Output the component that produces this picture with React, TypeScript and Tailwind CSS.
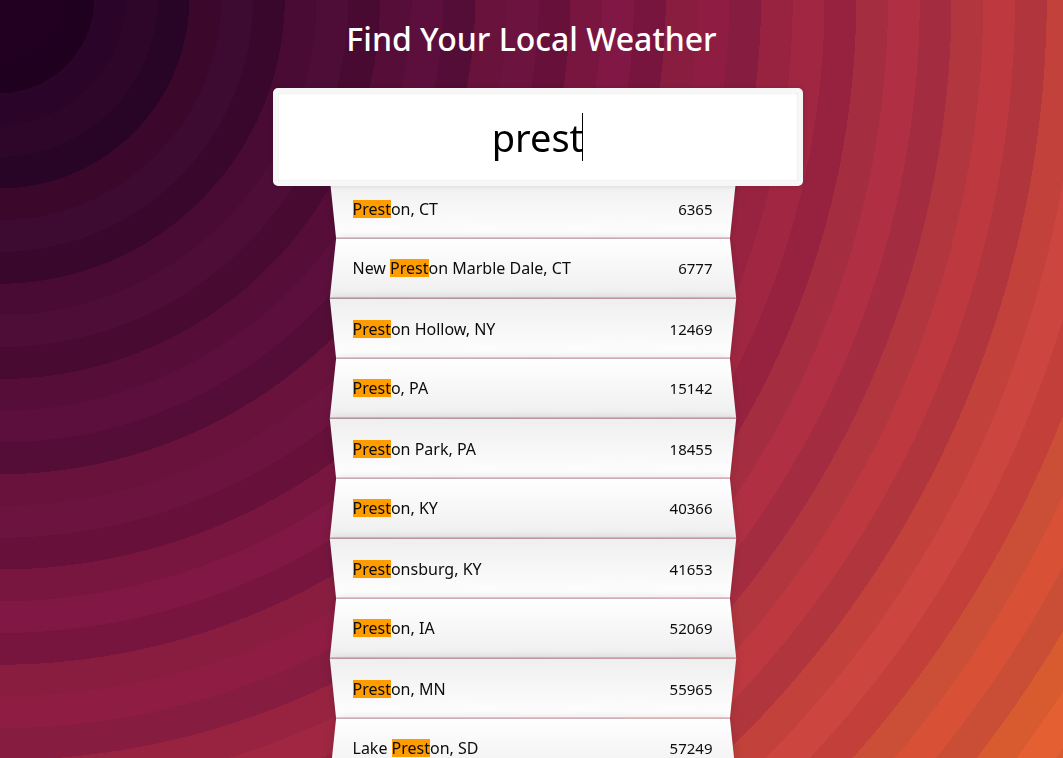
import { useState } from "react";

type Place = { before: string; match: string; after: string; code: string };

const places: Place[] = [
  { before: "", match: "Prest", after: "on, CT", code: "6365" },
  { before: "New ", match: "Prest", after: "on Marble Dale, CT", code: "6777" },
  { before: "", match: "Prest", after: "on Hollow, NY", code: "12469" },
  { before: "", match: "Prest", after: "o, PA", code: "15142" },
  { before: "", match: "Prest", after: "on Park, PA", code: "18455" },
  { before: "", match: "Prest", after: "on, KY", code: "40366" },
  { before: "", match: "Prest", after: "onsburg, KY", code: "41653" },
  { before: "", match: "Prest", after: "on, IA", code: "52069" },
  { before: "", match: "Prest", after: "on, MN", code: "55965" },
  { before: "Lake ", match: "Prest", after: "on, SD", code: "57249" },
];

// Concentric bands, from the top left corner outwards.
const BAND = 31.75;
const bands = [
  "#210021", "#210021", "#1f001e",
  "#2a0529", "#2d0629", "#280427",
  "#3b082c", "#3d0a31", "#39072b",
  "#490b33", "#4d0d36", "#480a31",
  "#560d37", "#5c0f3c", "#540d36",
  "#68123c", "#6d133f", "#66103a",
  "#79163f", "#811744", "#77153e",
  "#881d40", "#8f1c43", "#861c40",
  "#982341", "#a02641", "#972240",
  "#a52d40", "#b02f42", "#a42c40",
  "#b2363d", "#be3840", "#b1353d",
  "#c2413a", "#cc453f", "#c24039",
  "#cb4e36", "#d85137", "#ca4d35",
  "#d75b2f", "#e46033", "#d75b2f",
];

const rings = `radial-gradient(circle at -1px -2px, ${bands
  .map((c, i) => `${c} ${i * BAND}px ${(i + 1) * BAND}px`)
  .join(", ")})`;

function Row({ place }: { place: Place }) {
  return (
    <li className="group relative isolate flex h-[60px] items-center justify-between px-5 leading-5 text-[#0c0c0c] odd:pt-[2px]">
      <span
        aria-hidden="true"
        className="absolute inset-x-0 -z-10 border-b border-[#c4a0ae] bg-linear-to-b shadow-[0_0_10px_rgba(0,0,0,0.14)] group-odd:top-px group-odd:-bottom-px group-odd:from-[#efefef] group-odd:to-white group-odd:[transform:perspective(100px)_rotateX(-3deg)] group-even:inset-y-0 group-even:from-white group-even:to-[#efefef] group-even:[transform:perspective(100px)_rotateX(3deg)]"
      />
      <span className="text-base leading-5">
        {place.before}
        <mark className="inline-block bg-[#ff9d00] leading-[18px] text-inherit">{place.match}</mark>
        {place.after}
      </span>
      <span className="text-[15px] leading-5">{place.code}</span>
    </li>
  );
}

export default function App() {
  const [query, setQuery] = useState("prest");
  return (
    <main
      className="h-screen overflow-y-auto overflow-x-hidden bg-[#e46033] font-['Noto_Sans',sans-serif] [scrollbar-width:none]"
      style={{ backgroundImage: rings }}
    >
      <h1 className="pt-[17px] text-center text-[32px] leading-[43px] font-medium text-white">
        Find Your Local Weather
      </h1>
      <form
        className="mx-auto mt-7 flex w-[530px] max-w-full flex-col items-center"
        onSubmit={(e) => e.preventDefault()}
      >
        <div className="relative left-[6px] z-10 w-full">
          <input
            type="text"
            aria-label="City or zip code"
            value={query}
            onChange={(e) => setQuery(e.target.value)}
            className="h-[98px] w-full rounded-[5px] border-[5px] border-[#f7f7f7] bg-white px-5 text-center text-[38px] text-black caret-transparent shadow-[0_0_5px_rgba(0,0,0,0.12),inset_0_0_2px_rgba(0,0,0,0.19)] outline-none"
          />
          <span aria-hidden="true" className="absolute top-[25px] left-[calc(50%+44px)] h-12 w-px bg-black" />
        </div>
        <ul className="relative left-px -mt-2 w-[400px] max-w-full">
          {places.map((p) => (
            <Row key={p.code} place={p} />
          ))}
        </ul>
      </form>
    </main>
  );
}
